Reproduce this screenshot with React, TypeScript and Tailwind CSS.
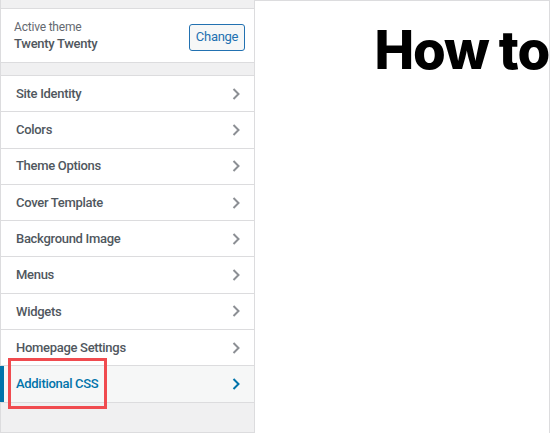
const items = [
  "Site Identity",
  "Colors",
  "Theme Options",
  "Cover Template",
  "Background Image",
  "Menus",
  "Widgets",
  "Homepage Settings",
];

function Chevron({ className }: { className?: string }) {
  return (
    <svg width="10" height="14" viewBox="0 0 10 14" fill="none" className={className}>
      <path d="M2.5 2l5 5-5 5" stroke="currentColor" strokeWidth="2" />
    </svg>
  );
}

export default function App() {
  return (
    <div className="flex h-[433px] w-[550px] overflow-hidden bg-white font-['Roboto',sans-serif]">
      {/* Customizer sidebar */}
      <div className="relative flex h-full w-[255px] shrink-0 flex-col border-x border-b border-[#dcdcde] bg-[#f0f0f1]">
        <div className="mt-[8px] flex h-[55px] items-center justify-between border-y border-[#dcdcde] bg-white pl-[13px] pr-[9px]">
          <div className="flex flex-col leading-none">
            <span className="text-[12px] tracking-[-0.2px] text-[#646970]">Active theme</span>
            <span className="mt-[4px] text-[13px] font-medium tracking-[-0.3px] text-[#50575e]">Twenty Twenty</span>
          </div>
          <button className="mt-[3px] h-[27px] w-[56px] rounded-[3px] border border-[#2271b1] bg-[#f6f7f7] text-[13px] tracking-[-0.3px] text-[#2271b1]">
            Change
          </button>
        </div>

        <div className="mt-[12px] flex flex-col border-t border-[#dcdcde]">
          {items.map((label) => (
            <div
              key={label}
              className="flex h-[36.3px] items-center justify-between border-b border-[#dcdcde] bg-white pl-[15px] pr-[13px]"
            >
              <span className="text-[13px] font-medium tracking-[-0.3px] text-[#50575e]">{label}</span>
              <Chevron className="text-[#8c8f94]" />
            </div>
          ))}
          <div className="relative flex h-[36.3px] items-center justify-between border-b border-[#dcdcde] bg-[#f6f7f7] pl-[15px] pr-[13px]">
            <div className="absolute -left-px top-0 h-full w-[4px] bg-[#0073aa]" />
            <span className="text-[13px] font-medium tracking-[-0.3px] text-[#0073aa]">Additional CSS</span>
            <Chevron className="text-[#0073aa]" />
          </div>
        </div>

        {/* annotation box */}
        <div className="pointer-events-none absolute left-[7px] top-[358px] h-[51px] w-[99px] border-[3px] border-[#f04b4f]" />
      </div>

      {/* Preview */}
      <div className="flex h-full flex-1 justify-end overflow-hidden border-r border-t border-[#dcdcde] bg-white">
        <h1 className="mt-[10px] whitespace-nowrap font-['Inter',sans-serif] text-[53px] font-extrabold tracking-[-1.2px] text-black">
          How to
        </h1>
      </div>
    </div>
  );
}
